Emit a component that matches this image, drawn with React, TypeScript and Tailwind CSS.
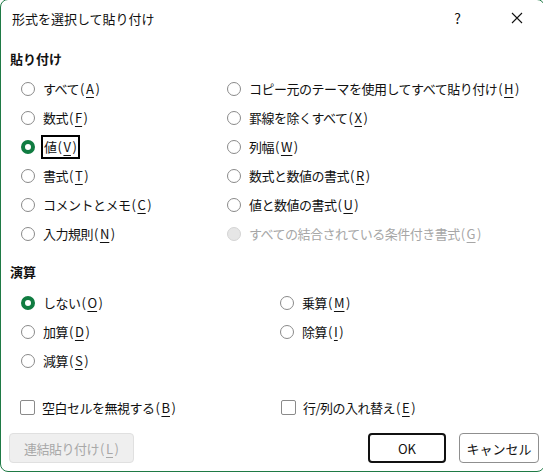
import React from "react";

type Opt = { label: string; key: string; checked?: boolean; disabled?: boolean; focus?: boolean };

const pasteLeft: Opt[] = [
  { label: "すべて", key: "A" },
  { label: "数式", key: "F" },
  { label: "値", key: "V", checked: true, focus: true },
  { label: "書式", key: "T" },
  { label: "コメントとメモ", key: "C" },
  { label: "入力規則", key: "N" },
];

const pasteRight: Opt[] = [
  { label: "コピー元のテーマを使用してすべて貼り付け", key: "H" },
  { label: "罫線を除くすべて", key: "X" },
  { label: "列幅", key: "W" },
  { label: "数式と数値の書式", key: "R" },
  { label: "値と数値の書式", key: "U" },
  { label: "すべての結合されている条件付き書式", key: "G", disabled: true },
];

// mnemonic in parentheses, underlined like the Windows access key
function Label({ label, k }: { label: string; k: string }) {
  return (
    <span className="flex items-center">
      <span className="tracking-[-0.5px]">{label}</span>
      <span className="ml-[1px] mr-[1.5px]">(</span>
      <span className="underline underline-offset-[3px] decoration-1">{k}</span>
      <span className="ml-[1.5px]">)</span>
    </span>
  );
}

function Radio({ opt }: { opt: Opt }) {
  let circle = "border border-[#8a8a8a] bg-white";
  if (opt.checked) circle = "border-[4px] border-[#107c41] bg-white";
  if (opt.disabled) circle = "border border-[#d4d4d4] bg-[#e6e6e6]";
  return (
    <div className={`flex h-[29px] items-center gap-[8px] ${opt.disabled ? "text-[#a6a6a6]" : "text-[#111]"}`}>
      <span className={`h-[14px] w-[14px] shrink-0 rounded-full ${circle}`} />
      {opt.focus ? (
        <span className="-ml-[2px] flex h-[24px] items-center border-2 border-black px-px">
          <Label label={opt.label} k={opt.key} />
        </span>
      ) : (
        <Label label={opt.label} k={opt.key} />
      )}
    </div>
  );
}

function Check({ label, k }: { label: string; k: string }) {
  return (
    <div className="flex h-[29px] items-center gap-[7px] text-[#111]">
      <span className="h-[15px] w-[15px] shrink-0 rounded-[2px] border border-[#8a8a8a] bg-white" />
      <Label label={label} k={k} />
    </div>
  );
}

export default function App() {
  return (
    <div
      className="h-[472px] w-[543px] overflow-hidden bg-white text-[13px] leading-none"
      style={{ fontFamily: '"Noto Sans CJK JP", "Noto Sans", sans-serif' }}
    >
      <div className="-mt-px flex h-[473px] w-[545px] flex-col rounded-[8px] border border-[#1f7a45] bg-white">
        {/* title bar */}
        <div className="flex h-[36px] items-center pl-[11px] text-[#111]">
          <span>形式を選択して貼り付け</span>
          <span className="ml-auto mr-[50px] text-[14px]">?</span>
          <svg width="12" height="12" viewBox="0 0 12 12" className="mr-[21px]">
            <path d="M1 1L11 11M11 1L1 11" stroke="#111" strokeWidth="1.1" />
          </svg>
        </div>

        <div className="mt-[12px] flex h-[20px] items-center pl-[9px] font-bold text-[#111]">貼り付け</div>
        <div className="mt-[6px] grid grid-cols-[206px_1fr] pl-[20px]">
          <div className="flex flex-col">
            {pasteLeft.map((o) => (
              <Radio key={o.key} opt={o} />
            ))}
          </div>
          <div className="flex flex-col">
            {pasteRight.map((o) => (
              <Radio key={o.key} opt={o} />
            ))}
          </div>
        </div>

        <div className="mt-[13px] flex h-[20px] items-center pl-[9px] font-bold text-[#111]">演算</div>
        <div className="mt-[7px] grid grid-cols-[259px_1fr] pl-[20px]">
          <div className="flex flex-col">
            <Radio opt={{ label: "しない", key: "O", checked: true }} />
            <Radio opt={{ label: "加算", key: "D" }} />
            <Radio opt={{ label: "減算", key: "S" }} />
          </div>
          <div className="flex flex-col">
            <Radio opt={{ label: "乗算", key: "M" }} />
            <Radio opt={{ label: "除算", key: "I" }} />
          </div>
        </div>

        <div className="mt-[18px] grid grid-cols-[261px_1fr] pl-[19px]">
          <Check label="空白セルを無視する" k="B" />
          <Check label="行/列の入れ替え" k="E" />
        </div>

        <div className="mt-[11px] flex items-center pl-[8px] pr-[5px]">
          <button
            type="button"
            disabled
            className="flex h-[30px] w-[125px] items-center justify-center rounded-[4px] border border-[#e0e0e0] bg-[#efefef] text-[#a8a8a8]"
          >
            <Label label="連結貼り付け" k="L" />
          </button>
          <button
            type="button"
            className="ml-auto h-[30px] w-[78px] rounded-[4px] border-2 border-[#111] bg-white text-[#111]"
          >
            OK
          </button>
          <button
            type="button"
            className="ml-[13px] h-[30px] w-[80px] rounded-[4px] border border-[#8f8f8f] bg-white text-[#111]"
          >
            キャンセル
          </button>
        </div>
      </div>
    </div>
  );
}
